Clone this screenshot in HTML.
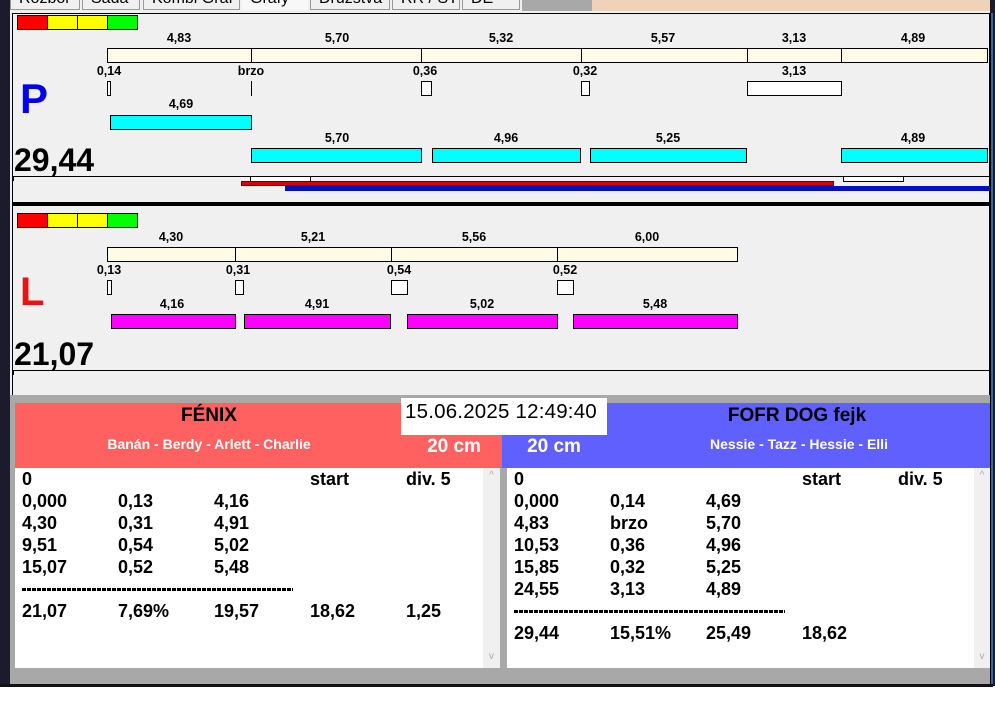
<!DOCTYPE html>
<html><head><meta charset="utf-8"><style>
*{margin:0;padding:0;box-sizing:border-box}
body{width:995px;height:716px;background:#fff;position:relative;overflow:hidden;font-family:"Liberation Sans",Arial,sans-serif}
.a{position:absolute}
.l{position:absolute;font-weight:bold;font-size:12.5px;transform:translateX(-50%);line-height:14px;white-space:nowrap}
.bx{position:absolute;border:1px solid #000}
.t{position:absolute;font-weight:bold;font-size:18px;line-height:22px;white-space:nowrap}
.tab{position:absolute;top:0;height:10px;background:#f0f0f0;border:1px solid #999;border-top:none;overflow:hidden}
.tab span{position:absolute;top:-10px;left:8px;font-size:16px;white-space:nowrap}
.dash{position:absolute;height:3px;background:repeating-linear-gradient(90deg,#000 0 4px,transparent 4px 5px)}
</style></head><body>
<div class="a" style="left:0;top:0;width:995px;height:686px;background:#1b1b2b"></div>
<!-- tab strip -->
<div class="a" style="left:10px;top:0;width:980px;height:12px;background:#f0f0f0"></div>
<div class="a" style="left:592px;top:0;width:398px;height:11px;background:#efd3b9"></div>
<div class="a" style="left:522px;top:0;width:70px;height:11px;background:#a8a8a8"></div>
<div class="tab" style="left:10px;width:70px"><span>Rozbor</span></div>
<div class="tab" style="left:82px;width:58px"><span>Sada</span></div>
<div class="tab" style="left:143px;width:97px"><span>Kombi Graf</span></div>
<div class="tab" style="left:242px;width:66px;border:none;background:#f8f8f8"><span>Grafy</span></div>
<div class="tab" style="left:310px;width:80px"><span>Družstva</span></div>
<div class="tab" style="left:392px;width:68px"><span>RR / ST</span></div>
<div class="tab" style="left:462px;width:58px"><span>DE</span></div>
<!-- main panel -->
<div class="a" style="left:10px;top:12px;width:980px;height:674px;background:#f0f0f0"></div>
<div class="a" style="left:12px;top:13px;width:978px;height:1px;background:#000"></div>
<div class="a" style="left:12px;top:13px;width:1px;height:383px;background:#000"></div>
<div class="a" style="left:989px;top:13px;width:2px;height:673px;background:#000"></div>
<div class="a" style="left:991px;top:13px;width:2px;height:673px;background:#2a6aa8"></div>

<!-- P panel -->
<div class="bx" style="left:17px;top:15px;width:31px;height:15px;background:#f00"></div>
<div class="bx" style="left:47px;top:15px;width:31px;height:15px;background:#ff0"></div>
<div class="bx" style="left:77px;top:15px;width:31px;height:15px;background:#ff0"></div>
<div class="bx" style="left:107px;top:15px;width:31px;height:15px;background:#0f0"></div>
<div class="l" style="left:179px;top:31px">4,83</div>
<div class="l" style="left:337px;top:31px">5,70</div>
<div class="l" style="left:501px;top:31px">5,32</div>
<div class="l" style="left:663px;top:31px">5,57</div>
<div class="l" style="left:794px;top:31px">3,13</div>
<div class="l" style="left:913px;top:31px">4,89</div>
<div class="bx" style="left:107px;top:48px;width:145px;height:15px;background:#fffbe6"></div>
<div class="bx" style="left:251px;top:48px;width:171px;height:15px;background:#fffbe6"></div>
<div class="bx" style="left:421px;top:48px;width:161px;height:15px;background:#fffbe6"></div>
<div class="bx" style="left:581px;top:48px;width:167px;height:15px;background:#fffbe6"></div>
<div class="bx" style="left:747px;top:48px;width:95px;height:15px;background:#fffbe6"></div>
<div class="bx" style="left:841px;top:48px;width:147px;height:15px;background:#fffbe6"></div>
<div class="l" style="left:109px;top:64px">0,14</div>
<div class="l" style="left:251px;top:64px">brzo</div>
<div class="l" style="left:425px;top:64px">0,36</div>
<div class="l" style="left:585px;top:64px">0,32</div>
<div class="l" style="left:794px;top:64px">3,13</div>
<div class="bx" style="left:107px;top:81px;width:4px;height:15px;background:#fff"></div>
<div class="a" style="left:251px;top:81px;width:1px;height:15px;background:#000"></div>
<div class="bx" style="left:421px;top:81px;width:11px;height:15px;background:#fff"></div>
<div class="bx" style="left:581px;top:81px;width:9px;height:15px;background:#fff"></div>
<div class="bx" style="left:747px;top:81px;width:95px;height:15px;background:#fff"></div>
<div class="a" style="left:20px;top:76px;font-size:42px;font-weight:bold;color:#0000ee;line-height:46px">P</div>
<div class="l" style="left:181px;top:97px">4,69</div>
<div class="bx" style="left:110px;top:115px;width:142px;height:15px;background:#0ff"></div>
<div class="l" style="left:337px;top:131px">5,70</div>
<div class="l" style="left:506px;top:131px">4,96</div>
<div class="l" style="left:668px;top:131px">5,25</div>
<div class="l" style="left:913px;top:131px">4,89</div>
<div class="bx" style="left:251px;top:148px;width:171px;height:15px;background:#0ff"></div>
<div class="bx" style="left:432px;top:148px;width:149px;height:15px;background:#0ff"></div>
<div class="bx" style="left:590px;top:148px;width:157px;height:15px;background:#0ff"></div>
<div class="bx" style="left:841px;top:148px;width:147px;height:15px;background:#0ff"></div>
<div class="a" style="left:14px;top:142px;font-size:32px;font-weight:bold;line-height:37px">29,44</div>
<div class="a" style="left:12px;top:176px;width:978px;height:1px;background:#000"></div>
<div class="a" style="left:13px;top:176px;width:1px;height:5px;background:#000"></div>
<div class="bx" style="left:250px;top:176px;width:61px;height:6px;background:#fff"></div>
<div class="bx" style="left:843px;top:176px;width:61px;height:6px;background:#fff"></div>
<div class="a" style="left:241px;top:181px;width:593px;height:5px;background:#d00;border:1px solid #600"></div>
<div class="a" style="left:285px;top:186px;width:705px;height:5px;background:#0010c0"></div>
<div class="a" style="left:12px;top:202px;width:978px;height:4px;background:#000"></div>

<!-- L panel -->
<div class="bx" style="left:17px;top:213px;width:31px;height:15px;background:#f00"></div>
<div class="bx" style="left:47px;top:213px;width:31px;height:15px;background:#ff0"></div>
<div class="bx" style="left:77px;top:213px;width:31px;height:15px;background:#ff0"></div>
<div class="bx" style="left:107px;top:213px;width:31px;height:15px;background:#0f0"></div>
<div class="l" style="left:171px;top:230px">4,30</div>
<div class="l" style="left:313px;top:230px">5,21</div>
<div class="l" style="left:474px;top:230px">5,56</div>
<div class="l" style="left:647px;top:230px">6,00</div>
<div class="bx" style="left:107px;top:247px;width:129px;height:15px;background:#fffbe6"></div>
<div class="bx" style="left:235px;top:247px;width:157px;height:15px;background:#fffbe6"></div>
<div class="bx" style="left:391px;top:247px;width:167px;height:15px;background:#fffbe6"></div>
<div class="bx" style="left:557px;top:247px;width:181px;height:15px;background:#fffbe6"></div>
<div class="l" style="left:109px;top:263px">0,13</div>
<div class="l" style="left:238px;top:263px">0,31</div>
<div class="l" style="left:399px;top:263px">0,54</div>
<div class="l" style="left:565px;top:263px">0,52</div>
<div class="bx" style="left:107px;top:280px;width:5px;height:15px;background:#fff"></div>
<div class="bx" style="left:235px;top:280px;width:9px;height:15px;background:#fff"></div>
<div class="bx" style="left:391px;top:280px;width:17px;height:15px;background:#fff"></div>
<div class="bx" style="left:557px;top:280px;width:17px;height:15px;background:#fff"></div>
<div class="a" style="left:20px;top:270px;font-size:40px;font-weight:bold;color:#ee1111;line-height:44px">L</div>
<div class="l" style="left:172px;top:297px">4,16</div>
<div class="l" style="left:317px;top:297px">4,91</div>
<div class="l" style="left:482px;top:297px">5,02</div>
<div class="l" style="left:655px;top:297px">5,48</div>
<div class="bx" style="left:111px;top:314px;width:125px;height:15px;background:#f0f"></div>
<div class="bx" style="left:244px;top:314px;width:147px;height:15px;background:#f0f"></div>
<div class="bx" style="left:407px;top:314px;width:151px;height:15px;background:#f0f"></div>
<div class="bx" style="left:573px;top:314px;width:165px;height:15px;background:#f0f"></div>
<div class="a" style="left:14px;top:336px;font-size:32px;font-weight:bold;line-height:37px">21,07</div>
<div class="a" style="left:12px;top:370px;width:978px;height:1px;background:#000"></div>
<div class="a" style="left:13px;top:370px;width:1px;height:5px;background:#000"></div>

<!-- bottom section -->
<div class="a" style="left:10px;top:395px;width:980px;height:291px;background:#a8a8a8"></div>
<div class="a" style="left:15px;top:403px;width:487px;height:65px;background:#ff6060"></div>
<div class="a" style="left:502px;top:403px;width:488px;height:65px;background:#6060ff"></div>
<div class="a" style="left:401px;top:398px;width:206px;height:37px;background:#fff"></div>
<div class="a" style="left:405px;top:400px;font-size:20.5px;line-height:24px;letter-spacing:0.2px">15.06.2025 12:49:40</div>
<div class="l" style="left:209px;top:405px;font-size:19px;line-height:22px">FÉNIX</div>
<div class="l" style="left:797px;top:405px;font-size:19px;line-height:22px">FOFR DOG fejk</div>
<div class="l" style="left:209px;top:436px;font-size:14px;color:#fff;line-height:16px">Banán - Berdy - Arlett - Charlie</div>
<div class="l" style="left:799px;top:436px;font-size:14px;color:#fff;line-height:16px">Nessie - Tazz - Hessie - Elli</div>
<div class="l" style="left:454px;top:436px;font-size:19px;color:#fff;line-height:22px">20 cm</div>
<div class="l" style="left:554px;top:436px;font-size:19px;color:#fff;line-height:22px">20 cm</div>
<div class="a" style="left:15px;top:468px;width:485px;height:200px;background:#fff"></div>
<div class="a" style="left:483px;top:468px;width:17px;height:200px;background:#f0f0f0;color:#aaa;font-size:10px;text-align:center"><div style="margin-top:2px">^</div><div style="margin-top:170px">v</div></div>
<div class="a" style="left:507px;top:468px;width:483px;height:200px;background:#fff"></div>
<div class="a" style="left:974px;top:468px;width:16px;height:200px;background:#f0f0f0;color:#aaa;font-size:10px;text-align:center"><div style="margin-top:2px">^</div><div style="margin-top:170px">v</div></div>

<div class="t" style="left:22px;top:468px">0</div><div class="t" style="left:310px;top:468px">start</div><div class="t" style="left:406px;top:468px">div. 5</div>
<div class="t" style="left:22px;top:490px">0,000</div><div class="t" style="left:118px;top:490px">0,13</div><div class="t" style="left:214px;top:490px">4,16</div>
<div class="t" style="left:22px;top:512px">4,30</div><div class="t" style="left:118px;top:512px">0,31</div><div class="t" style="left:214px;top:512px">4,91</div>
<div class="t" style="left:22px;top:534px">9,51</div><div class="t" style="left:118px;top:534px">0,54</div><div class="t" style="left:214px;top:534px">5,02</div>
<div class="t" style="left:22px;top:556px">15,07</div><div class="t" style="left:118px;top:556px">0,52</div><div class="t" style="left:214px;top:556px">5,48</div>
<div class="dash" style="left:22px;top:588px;width:271px"></div>
<div class="t" style="left:22px;top:600px">21,07</div><div class="t" style="left:118px;top:600px">7,69%</div><div class="t" style="left:214px;top:600px">19,57</div><div class="t" style="left:310px;top:600px">18,62</div><div class="t" style="left:406px;top:600px">1,25</div>

<div class="t" style="left:514px;top:468px">0</div><div class="t" style="left:802px;top:468px">start</div><div class="t" style="left:898px;top:468px">div. 5</div>
<div class="t" style="left:514px;top:490px">0,000</div><div class="t" style="left:610px;top:490px">0,14</div><div class="t" style="left:706px;top:490px">4,69</div>
<div class="t" style="left:514px;top:512px">4,83</div><div class="t" style="left:610px;top:512px">brzo</div><div class="t" style="left:706px;top:512px">5,70</div>
<div class="t" style="left:514px;top:534px">10,53</div><div class="t" style="left:610px;top:534px">0,36</div><div class="t" style="left:706px;top:534px">4,96</div>
<div class="t" style="left:514px;top:556px">15,85</div><div class="t" style="left:610px;top:556px">0,32</div><div class="t" style="left:706px;top:556px">5,25</div>
<div class="t" style="left:514px;top:578px">24,55</div><div class="t" style="left:610px;top:578px">3,13</div><div class="t" style="left:706px;top:578px">4,89</div>
<div class="dash" style="left:514px;top:610px;width:271px"></div>
<div class="t" style="left:514px;top:622px">29,44</div><div class="t" style="left:610px;top:622px">15,51%</div><div class="t" style="left:706px;top:622px">25,49</div><div class="t" style="left:802px;top:622px">18,62</div>
<div class="a" style="left:0;top:684px;width:993px;height:3px;background:#111"></div>
</body></html>
